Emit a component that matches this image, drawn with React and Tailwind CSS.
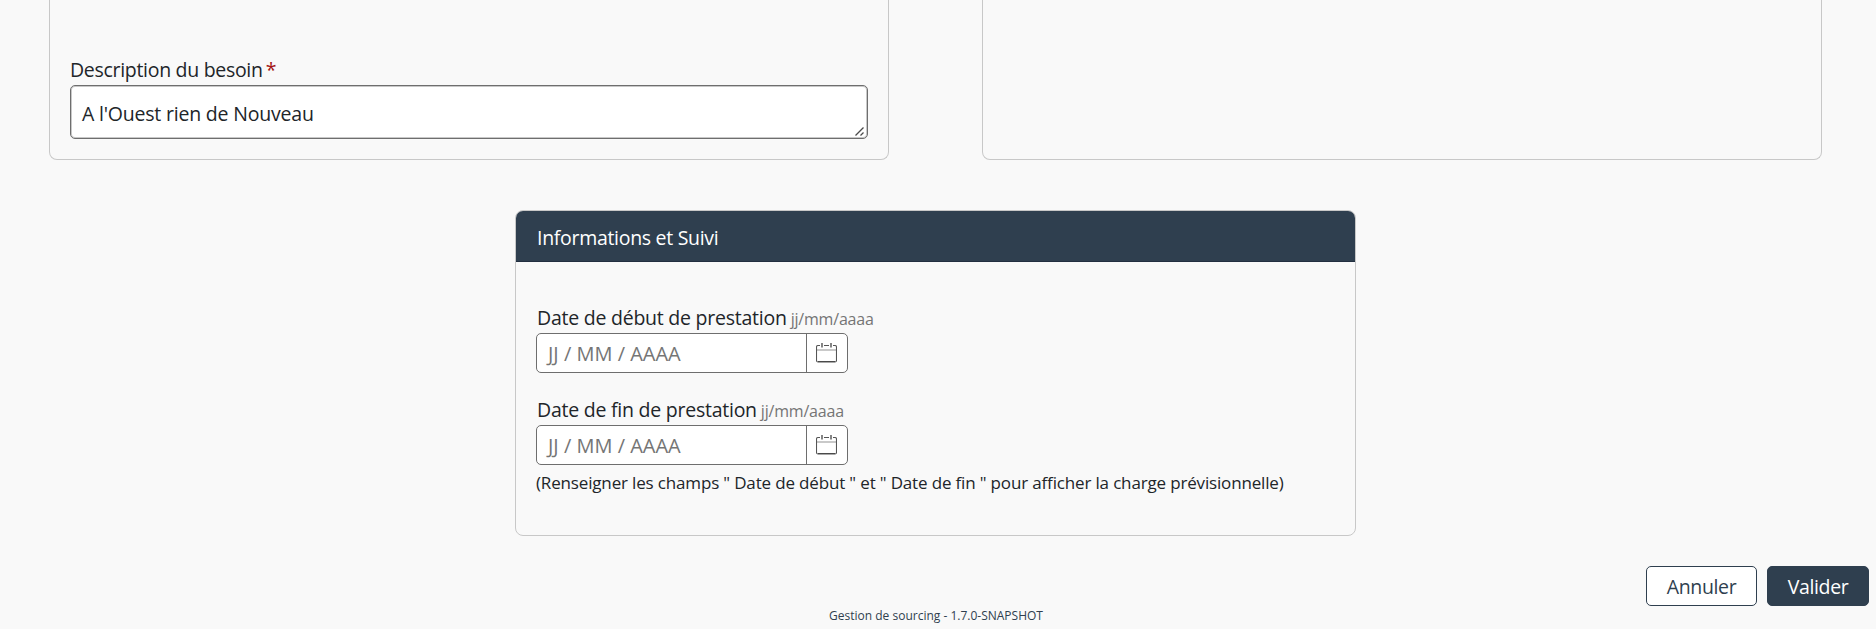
function CalendarIcon() {
  return (
    <svg width="21" height="20" viewBox="0 0 21 20" fill="none" className="block">
      <path d="M1 6.5H20M1 7.5H20" stroke="#c9c9c9" />
      <path
        d="M4 2.5H2Q.5 2.5 .5 4V17.5Q.5 19 2 19H19Q20.5 19 20.5 17.5V4Q20.5 2.5 19 2.5H17M8 2.5H13"
        stroke="#555"
        strokeWidth="1.1"
      />
      <path d="M6 0V4.5M15 0V4.5" stroke="#444" strokeWidth="1.3" />
      <path d="M2 18.5H19" stroke="#4a4a4a" />
    </svg>
  );
}

function DateField({ label }) {
  return (
    <div>
      <div className="flex h-[27px] items-baseline whitespace-nowrap pl-px leading-[29px]">
        <span className="text-[19.5px] tracking-[-0.24px]">{label}</span>
        <span className="ml-1 text-[16px] tracking-[-0.2px] text-[#757575]">jj/mm/aaaa</span>
      </div>
      <div className="mt-[3px] flex h-10 w-[312px] rounded-[5px] border border-[#6e6e6e] bg-white">
        <div className="w-[270px] border-r border-[#6e6e6e] pl-[11px] text-[20px] leading-[40px] text-[#757575]">
          JJ / MM / AAAA
        </div>
        <button className="flex flex-1 items-start justify-center pr-px pt-[9px]" aria-label={label}>
          <CalendarIcon />
        </button>
      </div>
    </div>
  );
}

export default function App() {
  return (
    <div className="flex h-[629px] w-[1876px] flex-col overflow-hidden bg-[#f9f9f9] font-['Open_Sans','Noto_Sans',sans-serif] text-[#212529]">
      <div className="flex h-40 gap-[93px] pl-[49px]">
        <section className="w-[840px] rounded-b-[8px] border border-t-0 border-[#c8c8c8] px-5 pt-[55px]">
          <div className="flex h-[27px] whitespace-nowrap text-[19.5px] leading-[29px]">
            <span className="tracking-[-0.3px]">Description du besoin</span>
            <span className="ml-[3px] text-[#a31515]">*</span>
          </div>
          <div className="relative mt-[3px] h-[54px] w-[798px] rounded-[5px] border border-[#6e6e6e] bg-white pl-[11px] text-[19.5px] leading-[55px] tracking-[-0.2px] shadow-[inset_0_0_0_1px_#c8c8c8]">
            A l'Ouest rien de Nouveau
            <svg className="absolute bottom-[2px] right-[3px]" width="9" height="9" viewBox="0 0 9 9">
              <path d="M.5 8.5L8.5 .5M5.5 8.5L8.5 5.5" stroke="#4b4b4b" strokeWidth="1.3" />
            </svg>
          </div>
        </section>
        <section className="w-[840px] rounded-b-[8px] border border-t-0 border-[#c8c8c8]" />
      </div>

      <section className="ml-[515px] mt-[50px] h-[326px] w-[841px] overflow-hidden rounded-[8px] border border-[#c8c8c8]">
        <header className="h-[51px] border-b border-[#222f40] bg-[#2f3f4f] pl-[21px] text-[19.5px] leading-[53px] tracking-[-0.3px] text-white">
          Informations et Suivi
        </header>
        <div className="flex flex-col pl-5 pt-[41px]">
          <DateField label="Date de début de prestation" />
          <div className="mt-[22px]">
            <DateField label="Date de fin de prestation" />
          </div>
          <p className="mt-1 h-[27px] whitespace-nowrap text-[17px] leading-[27px] tracking-[-0.16px]">
            (Renseigner les champs " Date de début " et " Date de fin " pour afficher la charge prévisionnelle)
          </p>
        </div>
      </section>

      <div className="mt-[30px] flex h-10 justify-end gap-[10px] pr-[7px] text-[19.5px] leading-[40px]">
        <button className="flex w-[111px] justify-center rounded-[5px] border border-[#2f3f4f] bg-white leading-[40px] tracking-[-0.35px] text-[#2f3f4f]">
          Annuler
        </button>
        <button className="flex w-[102px] justify-center rounded-[5px] border border-[#2f3f4f] bg-[#2f3f4f] leading-[40px] tracking-[-0.35px] text-white">
          Valider
        </button>
      </div>
      <footer className="flex justify-center pr-[4px] text-[12px] leading-[20px] text-[#2f3f4f]">
        Gestion de sourcing - 1.7.0-SNAPSHOT
      </footer>
    </div>
  );
}
